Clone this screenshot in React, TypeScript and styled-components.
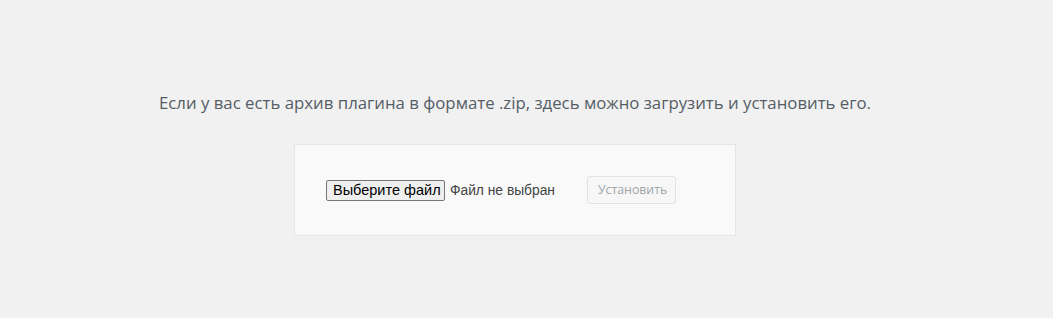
import styled, { createGlobalStyle } from "styled-components";

const GlobalStyle = createGlobalStyle`
  html, body {
    margin: 0;
    padding: 0;
    background: #f1f1f1;
  }
  body {
    font-family: "Open Sans", "Noto Sans", sans-serif;
  }
`;

function App() {
  return (
    <>
      <GlobalStyle />
      <Page>
        <Intro>
          Если у вас есть архив плагина в формате .zip, здесь можно загрузить и
          установить его.
        </Intro>
        <UploadForm>
          <FilePicker>
            <ChooseButton type="button">Выберите файл</ChooseButton>
            <FileName>Файл не выбран</FileName>
          </FilePicker>
          <InstallButton type="button" disabled>
            Установить
          </InstallButton>
        </UploadForm>
      </Page>
    </>
  );
}

export default App;

const Page = styled.div`
  width: 1030px;
  height: 318px;
  padding-top: 90px;
  box-sizing: border-box;
  display: flex;
  flex-direction: column;
  align-items: center;
`;

const Intro = styled.p`
  margin: 0;
  font-size: 16.8px;
  line-height: 26px;
  color: #555d66;
  white-space: nowrap;
`;

const UploadForm = styled.form`
  margin-top: 28px;
  width: 442px;
  height: 92px;
  box-sizing: border-box;
  padding: 30px 30px 30px 31px;
  background: #f9f9f9;
  border: 1px solid #e5e5e5;
  display: flex;
  align-items: center;
`;

const FilePicker = styled.div`
  width: 261px;
  display: flex;
  align-items: center;
`;

const ChooseButton = styled.button`
  height: 21px;
  width: 119px;
  padding: 0 6px;
  box-sizing: border-box;
  background: #efefef;
  border: 1px solid #767676;
  border-radius: 2px;
  font-family: "Liberation Sans", Arial, sans-serif;
  font-size: 14.5px;
  color: #000;
  white-space: nowrap;
`;

const FileName = styled.span`
  margin-left: 5px;
  font-family: "Liberation Sans", Arial, sans-serif;
  font-size: 13.8px;
  color: #444;
`;

const InstallButton = styled.button`
  height: 28px;
  width: 89px;
  padding: 0 10px 2px;
  box-sizing: border-box;
  background: #f7f7f7;
  border: 1px solid #e2e2e2;
  border-radius: 3px;
  font-family: "Open Sans", "Noto Sans", sans-serif;
  font-size: 12.3px;
  color: #a0a5aa;
  white-space: nowrap;
`;
